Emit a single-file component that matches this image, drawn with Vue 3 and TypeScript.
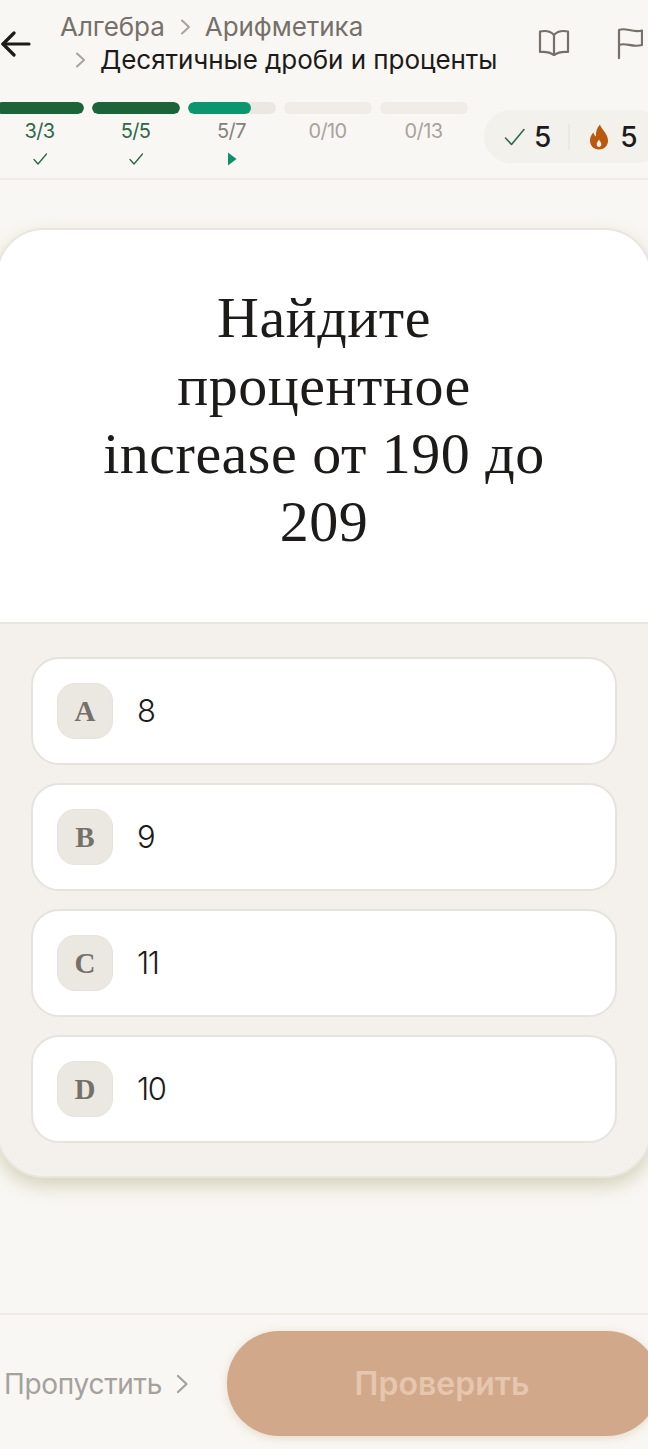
<script setup lang="ts">
interface Segment {
	label: string
	fill: number
	state: 'done' | 'active' | 'todo'
}

const segments: Segment[] = [
	{ label: '3/3', fill: 100, state: 'done' },
	{ label: '5/5', fill: 100, state: 'done' },
	{ label: '5/7', fill: 71.4, state: 'active' },
	{ label: '0/10', fill: 0, state: 'todo' },
	{ label: '0/13', fill: 0, state: 'todo' },
]

const options = [
	{ letter: 'A', text: '8' },
	{ letter: 'B', text: '9' },
	{ letter: 'C', text: '11' },
	{ letter: 'D', text: '10' },
]
</script>

<template>
	<div class="page">
		<header class="header">
			<div class="top-row">
				<svg class="back" width="30" height="30" viewBox="0 0 30 30" fill="none" stroke="#1d1b19" stroke-width="3.200" stroke-linecap="round" stroke-linejoin="round">
					<path d="M2 15H28" />
					<path d="M13 4L2 15L13 26" />
				</svg>
				<div class="crumbs">
					<div class="crumb-line">
						<span>Алгебра</span>
						<svg class="chev" width="12" height="16" viewBox="0 0 12 16" fill="none" stroke="#a8a39c" stroke-width="2" stroke-linecap="round" stroke-linejoin="round"><path d="M3 1.500L10 8L3 14.500" /></svg>
						<span>Арифметика</span>
					</div>
					<div class="crumb-line second">
						<svg class="chev" width="12" height="16" viewBox="0 0 12 16" fill="none" stroke="#a8a39c" stroke-width="2" stroke-linecap="round" stroke-linejoin="round"><path d="M3 1.500L10 8L3 14.500" /></svg>
						<span class="current">Десятичные дроби и проценты</span>
					</div>
				</div>
				<svg class="book" width="32" height="30" viewBox="0 0 32 30" fill="none" stroke="#75706a" stroke-width="2.200" stroke-linecap="round" stroke-linejoin="round">
					<path d="M16 7C13 3.500 7 2.500 2 3.500V24C7 23.500 12.500 24.500 16 27C19.500 24.500 25 23.500 30 24V3.500C25 2.500 19 3.500 16 7Z" />
					<path d="M16 7V27" />
				</svg>
				<svg class="flag" width="26" height="32" viewBox="0 0 26 32" fill="none" stroke="#75706a" stroke-width="2.200" stroke-linecap="round" stroke-linejoin="round">
					<path d="M2 31V3C9 0 15 6 25 3.500V18C15 21 9 15 2 18" />
				</svg>
			</div>
			<div class="progress-row">
				<div class="segments">
					<div v-for="seg in segments" :key="seg.label" class="segment" :class="seg.state">
						<div class="track">
							<div class="fill" :style="{ width: seg.fill + '%' }"></div>
						</div>
						<div class="seg-label">{{ seg.label }}</div>
						<svg v-if="seg.state === 'done'" class="seg-mark" width="16" height="14" viewBox="0 0 16 14" fill="none" stroke="#1b6339" stroke-width="1.200" stroke-linecap="round" stroke-linejoin="round"><path d="M2 7.500L6 12L14.500 2" /></svg>
						<svg v-else-if="seg.state === 'active'" class="seg-mark" width="16" height="14" viewBox="0 0 16 14"><path d="M4 .5L12.500 7L4 13.500Z" fill="#0f8f68" /></svg>
					</div>
				</div>
				<div class="stats">
					<svg width="22" height="18" viewBox="0 0 22 18" fill="none" stroke="#2f6650" stroke-width="1.600" stroke-linecap="round" stroke-linejoin="round"><path d="M1.500 10L7.500 16.500L20 1.500" /></svg>
					<span class="stat-num first">5</span>
					<span class="divider"></span>
					<svg class="flame" width="20" height="26" viewBox="0 0 20 26">
						<path d="M11 0.500C12 5 18.500 9 19 16C19.300 21.500 15.500 25.500 10 25.500C4.500 25.500 1 21.500 1 16.500C1 13 2.500 10.500 4.500 8.500C5 10.500 5.500 11.500 7 12.500C6.500 8 8 3.500 11 0.500Z" fill="#b9590f" />
						<path d="M10 15.500C11.200 17.500 12.300 18.800 12.300 20.500C12.300 22 11.300 23 10 23C8.700 23 7.700 22 7.700 20.500C7.700 18.800 8.800 17.500 10 15.500Z" fill="#f7efe3" />
					</svg>
					<span class="stat-num">5</span>
				</div>
			</div>
		</header>

		<main class="main">
			<section class="card">
				<div class="question-wrap">
					<h1 class="question">Найдите процентное increase от 190 до 209</h1>
				</div>
				<div class="answers">
					<div v-for="opt in options" :key="opt.letter" class="option">
						<span class="letter">{{ opt.letter }}</span>
						<span class="option-text">{{ opt.text }}</span>
					</div>
				</div>
			</section>
		</main>

		<footer class="footer">
			<div class="skip">
				<span>Пропустить</span>
				<svg width="14" height="20" viewBox="0 0 14 20" fill="none" stroke="#a5a19b" stroke-width="2.200" stroke-linecap="round" stroke-linejoin="round"><path d="M3 2L11.500 10L3 18" /></svg>
			</div>
			<button class="check" type="button">Проверить</button>
		</footer>
	</div>
</template>

<style>
html, body {
	margin: 0;
	background: #f9f7f3;
}
</style>

<style scoped>
.page {
	width: 648px;
	height: 1449px;
	overflow: hidden;
	background: #f9f7f3;
	display: flex;
	flex-direction: column;
	font-family: Inter, "Noto Sans", sans-serif;
	color: #1d1b19;
}
.header {
	height: 180px;
	box-sizing: border-box;
	border-bottom: 2px solid #eeebe5;
	flex: none;
}
.top-row {
	height: 102px;
	display: flex;
	align-items: flex-start;
}
.back {
	margin: 29px 0 0 1px;
	flex: none;
}
.crumbs {
	margin: 10px 0 0 29px;
	width: 469px;
	flex: none;
	font-size: 26px;
	line-height: 36px;
	color: #75706a;
	letter-spacing: -0.05px;
}
.crumb-line {
	display: flex;
	align-items: center;
	gap: 14px;
	height: 34px;
}
.crumb-line.second {
	padding-left: 14px;
	margin-top: -1px;
}
.current {
	color: #1d1b19;
}
.book {
	margin: 28px 0 0 9px;
	flex: none;
}
.flag {
	margin: 27px 0 0 47px;
	flex: none;
}
.progress-row {
	display: flex;
	align-items: flex-start;
	margin-left: -4px;
}
.segments {
	display: flex;
	gap: 8px;
	width: 472px;
	flex: none;
}
.segment {
	width: 88px;
	flex: none;
	display: flex;
	flex-direction: column;
	align-items: center;
}
.track {
	width: 100%;
	height: 12px;
	border-radius: 6px;
	background: #f0ede8;
	overflow: hidden;
}
.active .track {
	background: #ebe8e2;
}
.fill {
	height: 100%;
	border-radius: 6px;
	background: #1b6339;
}
.active .fill {
	background: #0b966e;
}
.seg-label {
	margin: 5px 1px 0 0;
	font-size: 20px;
	line-height: 24px;
	color: #a8a39c;
	letter-spacing: -0.6px;
}
.done .seg-label {
	color: #2c6a47;
}
.active .seg-label {
	color: #86817b;
}
.seg-mark {
	margin-top: 9px;
}
.stats {
	margin: 8px 0 0 16px;
	width: 180px;
	height: 53px;
	flex: none;
	border-radius: 27px;
	background: #f3f1ec;
	display: flex;
	align-items: center;
	padding-left: 20px;
	box-sizing: border-box;
}
.stat-num {
	font-size: 28px;
	font-weight: 500;
}
.stat-num.first {
	margin-left: 8px;
}
.divider {
	width: 2px;
	height: 26px;
	margin: 0 20px 0 17px;
	background: #ece9e3;
}
.flame {
	flex: none;
	margin-left: -1px;
}
.stat-num:last-child {
	margin-left: 11px;
}
.main {
	flex: 1;
	padding-top: 48px;
	min-height: 0;
}
.card {
	margin: 0 -4px;
	height: 950px;
	box-sizing: border-box;
	border-radius: 48px;
	background: #f4f1ec;
	border: 2px solid #e9e6e0;
	box-shadow: 0 8px 18px rgba(150, 140, 90, 0.35);
	overflow: hidden;
	display: flex;
	flex-direction: column;
}
.question-wrap {
	height: 394px;
	flex: none;
	background: #fff;
	border-bottom: 2px solid #e9e6e0;
	display: flex;
	justify-content: center;
	box-sizing: border-box;
	padding-top: 54px;
}
.question {
	margin: 0;
	width: 470px;
	font-family: "Liberation Serif", serif;
	font-weight: 400;
	font-size: 58px;
	line-height: 68px;
	text-align: center;
	letter-spacing: 0.5px;
	color: #1d1b19;
}
.answers {
	padding: 33px 33px 0;
	display: flex;
	flex-direction: column;
	gap: 18px;
}
.option {
	height: 108px;
	box-sizing: border-box;
	border: 2px solid #e5e3de;
	border-radius: 28px;
	background: #fff;
	display: flex;
	align-items: center;
	padding-left: 24px;
}
.letter {
	width: 56px;
	height: 56px;
	flex: none;
	border-radius: 18px;
	background: #ebe7e1;
	border: 1px solid #e6e2dc;
	box-sizing: border-box;
	display: flex;
	align-items: center;
	justify-content: center;
	font-family: "Liberation Serif", serif;
	font-weight: 700;
	font-size: 29px;
	color: #75706a;
}
.option-text {
	margin: 0 0 2px 24px;
	font-size: 31px;
	font-weight: 300;
	letter-spacing: -1.5px;
}
.footer {
	height: 136px;
	flex: none;
	box-sizing: border-box;
	border-top: 2px solid #eeebe5;
	display: flex;
	align-items: flex-start;
	padding-left: 4px;
}
.skip {
	display: flex;
	align-items: center;
	gap: 13px;
	width: 223px;
	flex: none;
	margin-top: 50px;
	font-size: 28px;
	line-height: 38px;
	color: #a5a19b;
	letter-spacing: -0.3px;
}
.check {
	width: 432px;
	height: 105px;
	flex: none;
	margin-top: 16px;
	border: none;
	border-radius: 52px;
	background: #d2a88a;
	box-shadow: 0 2px 10px rgba(190, 150, 110, 0.3);
	font-family: Inter, "Noto Sans", sans-serif;
	font-size: 32px;
	font-weight: 600;
	color: #e6c6af;
	padding: 0 2px 0 0;
}
</style>
